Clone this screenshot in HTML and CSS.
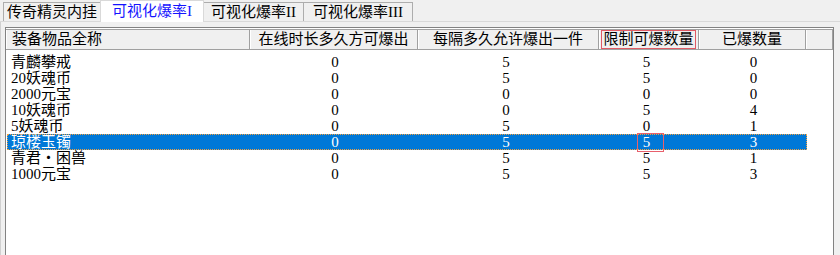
FILE: index.html
```html
<!DOCTYPE html>
<html lang="zh-CN">

<head>
    <meta charset="UTF-8">
    <title>可视化爆率</title>
    <link rel="stylesheet" href="styles.css">
</head>

<body>
    <div class="window">
        <div class="tabs">
            <div class="tab">传奇精灵内挂</div>
            <div class="tab active">可视化爆率I</div>
            <div class="tab">可视化爆率II</div>
            <div class="tab">可视化爆率III</div>
        </div>

        <div class="panel">
            <div class="list">
                <div class="head">
                    <div class="col-name">装备物品全称</div>
                    <div>在线时长多久方可爆出</div>
                    <div>每隔多久允许爆出一件</div>
                    <div><span class="mark">限制可爆数量</span></div>
                    <div>已爆数量</div>
                    <div></div>
                </div>

                <div class="rows">
                    <div class="row"><span class="name">青麟攀戒</span><span>0</span><span>5</span><span>5</span><span>0</span></div>
                    <div class="row"><span class="name">20妖魂币</span><span>0</span><span>5</span><span>5</span><span>0</span></div>
                    <div class="row"><span class="name">2000元宝</span><span>0</span><span>0</span><span>0</span><span>0</span></div>
                    <div class="row"><span class="name">10妖魂币</span><span>0</span><span>0</span><span>5</span><span>4</span></div>
                    <div class="row"><span class="name">5妖魂币</span><span>0</span><span>5</span><span>0</span><span>1</span></div>
                    <div class="row selected"><span class="name">琼楼玉镯</span><span>0</span><span>5</span><span><b class="hit">5</b></span><span>3</span></div>
                    <div class="row"><span class="name">青君・困兽</span><span>0</span><span>5</span><span>5</span><span>1</span></div>
                    <div class="row"><span class="name">1000元宝</span><span>0</span><span>5</span><span>5</span><span>3</span></div>
                </div>
            </div>
        </div>
    </div>
</body>

</html>
```

FILE: styles.css
```css
body {
    margin: 0;
    background: #f0f0f0;
    font-family: "Liberation Serif", "Noto Sans CJK SC", serif;
    font-size: 15px;
    color: #000;
    overflow: hidden;
}

.window {
    width: 840px;
    height: 255px;
    overflow: hidden;
}

/* tab strip */
.tabs {
    display: flex;
    align-items: flex-end;
    height: 21px;
    padding-left: 3px;
    border-bottom: 1px solid #d9d9d9;
}

.tab {
    height: 19px;
    line-height: 19px;
    text-align: center;
    border: 1px solid #adadad;
    border-bottom: none;
    background: #f0f0f0;
    margin-right: -1px;
    box-sizing: border-box;
}

.tab:nth-child(1) { width: 98px; }
.tab:nth-child(2) { width: 104px; }
.tab:nth-child(3) { width: 101px; }
.tab:nth-child(4) { width: 110px; }

.tab.active {
    height: 22px;
    line-height: 21px;
    margin-bottom: -1px;
    background: #fff;
    color: #1414ff;
    border-color: #d9d9d9;
    position: relative;
    z-index: 1;
}

/* panel and list */
.panel {
    height: 240px;
    border-left: 1px solid #d0d0d0;
    padding: 5px 5px 0 4px;
    background: #f0f0f0;
}

.list {
    width: 827px;
    height: 260px;
    border: 1px solid #828282;
    background: #fff;
}

.head {
    display: grid;
    grid-template-columns: 244px 168px 181px 100px 107px 1fr;
    height: 20px;
    border-top: 1px solid #a0a0a0;
    margin-top: 1px;
}

.head div {
    line-height: 18px;
    text-align: center;
    background: #f0f0f0;
    border-right: 1px solid #a0a0a0;
    border-bottom: 1px solid #a0a0a0;
    box-shadow: inset 1px 0 #fff;
    white-space: nowrap;
    overflow: hidden;
}

.head .col-name {
    text-align: left;
    padding-left: 6px;
}

.mark {
    display: inline-block;
    height: 17px;
    line-height: 17px;
    padding: 0 1px;
    border: 1px solid #e05a64;
}

.rows {
    padding-top: 4px;
}

.row {
    display: grid;
    grid-template-columns: 244px 168px 181px 100px 107px;
    width: 800px;
    height: 16px;
    line-height: 16px;
    box-sizing: border-box;
    margin-left: 1px;
}

.row span {
    text-align: center;
    white-space: nowrap;
}

.row span:nth-child(3),
.row span:nth-child(4) {
    padding-right: 7px;
}

.row .name {
    text-align: left;
    padding-left: 4px;
}

.row.selected {
    background: #0078d7;
    color: #fff;
    outline: 1px dotted #f0a040;
    outline-offset: -1px;
}

.hit {
    font-weight: normal;
    position: relative;
}

.hit::after {
    content: "";
    position: absolute;
    left: -6px;
    right: -14px;
    top: -1px;
    bottom: -2px;
    border: 1px solid #e8606c;
}
```
